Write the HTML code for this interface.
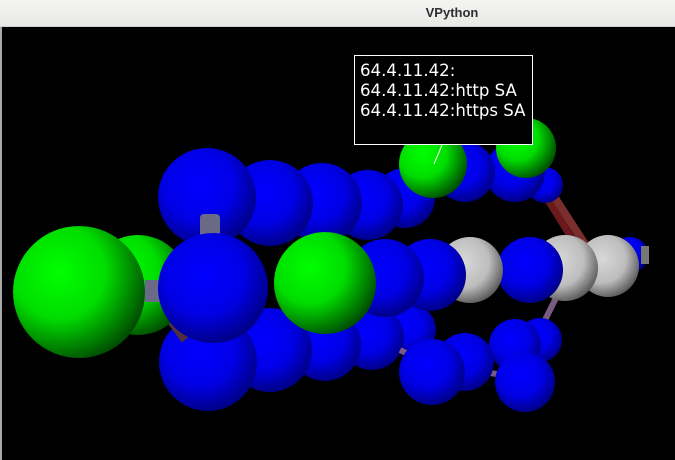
<!DOCTYPE html>
<html><head><meta charset="utf-8"><style>
html,body{margin:0;padding:0;width:675px;height:460px;overflow:hidden;background:#000}
#tb{position:absolute;left:0;top:0;width:675px;height:27px;background:linear-gradient(#f4f4f3,#e8e8e7);border-bottom:1px solid #cfcfcf;box-sizing:border-box}
#tb span{position:absolute;left:452px;top:5px;transform:translateX(-50%);font:bold 13px "Liberation Sans",sans-serif;color:#2e2e2e}
svg{position:absolute;left:0;top:27px}
</style></head><body>
<div id="tb"><span>VPython</span></div>
<svg width="675" height="433" viewBox="0 27 675 433">
<defs>
<radialGradient id="b" cx="42%" cy="38%" r="65%"><stop offset="0" stop-color="#0000ff"/><stop offset="0.55" stop-color="#0000e6"/><stop offset="1" stop-color="#000080"/></radialGradient>
<radialGradient id="g" cx="35%" cy="35%" r="70%"><stop offset="0" stop-color="#00ff00"/><stop offset="0.5" stop-color="#00dd00"/><stop offset="1" stop-color="#004d00"/></radialGradient>
<radialGradient id="w" cx="40%" cy="38%" r="65%"><stop offset="0" stop-color="#d8d8d8"/><stop offset="0.6" stop-color="#bdbdbd"/><stop offset="1" stop-color="#5a5a5a"/></radialGradient>
</defs>
<rect x="0" y="27" width="2" height="433" fill="#aaa"/>
<line x1="540" y1="175" x2="592" y2="255" stroke="#7a2e2e" stroke-width="8"/>
<line x1="548" y1="200" x2="582" y2="255" stroke="#6a1a1a" stroke-width="7"/>
<line x1="560" y1="290" x2="545" y2="320" stroke="#7a5a80" stroke-width="6"/>
<circle cx="545" cy="185" r="18" fill="url(#b)"/>
<circle cx="515" cy="172" r="30" fill="url(#b)"/>
<circle cx="465" cy="172" r="30" fill="url(#b)"/>
<circle cx="405" cy="198" r="30" fill="url(#b)"/>
<circle cx="368" cy="205" r="35" fill="url(#b)"/>
<circle cx="322" cy="203" r="40" fill="url(#b)"/>
<circle cx="270" cy="203" r="43" fill="url(#b)"/>
<circle cx="207" cy="197" r="49" fill="url(#b)"/>
<circle cx="433" cy="164" r="34" fill="url(#g)"/>
<circle cx="526" cy="148" r="30" fill="url(#g)"/>
<circle cx="540" cy="340" r="22" fill="url(#b)"/>
<circle cx="515" cy="345" r="26" fill="url(#b)"/>
<circle cx="410" cy="330" r="26" fill="url(#b)"/>
<circle cx="372" cy="338" r="32" fill="url(#b)"/>
<circle cx="325" cy="345" r="36" fill="url(#b)"/>
<circle cx="270" cy="350" r="42" fill="url(#b)"/>
<line x1="400" y1="350" x2="420" y2="360" stroke="#7a5a80" stroke-width="6"/>
<line x1="490" y1="373" x2="510" y2="376" stroke="#7a5a80" stroke-width="6"/>
<circle cx="465" cy="362" r="29" fill="url(#b)"/>
<circle cx="432" cy="372" r="33" fill="url(#b)"/>
<circle cx="525" cy="382" r="30" fill="url(#b)"/>
<circle cx="208" cy="362" r="49" fill="url(#b)"/>
<line x1="170" y1="320" x2="185" y2="340" stroke="#503040" stroke-width="8"/>
<circle cx="630" cy="255" r="18" fill="url(#b)"/>
<rect x="641" y="246" width="8" height="18" fill="#777"/>
<circle cx="608" cy="266" r="31" fill="url(#w)"/>
<circle cx="565" cy="268" r="33" fill="url(#w)"/>
<circle cx="530" cy="270" r="33" fill="url(#b)"/>
<circle cx="470" cy="270" r="33" fill="url(#w)"/>
<circle cx="430" cy="275" r="36" fill="url(#b)"/>
<circle cx="385" cy="278" r="39" fill="url(#b)"/>
<circle cx="138" cy="285" r="50" fill="url(#g)"/>
<circle cx="325" cy="283" r="51" fill="url(#g)"/>
<rect x="145" y="280" width="18" height="22" fill="#6a6a86"/>
<rect x="200" y="214" width="20" height="26" rx="4" fill="#6a6a86"/>
<circle cx="79" cy="292" r="66" fill="url(#g)"/>
<circle cx="213" cy="288" r="55" fill="url(#b)"/>
<line x1="442" y1="145" x2="434" y2="164" stroke="#fff" stroke-width="1"/>
<rect x="354.5" y="55.5" width="178" height="89" fill="#000" stroke="#fff" stroke-width="1"/>
<text font-family="DejaVu Sans, sans-serif" font-size="16.6" fill="#fff"><tspan x="360" y="76">64.4.11.42:</tspan><tspan x="360" y="96">64.4.11.42:http SA</tspan><tspan x="360" y="116">64.4.11.42:https SA</tspan></text>
</svg>
</body></html>
